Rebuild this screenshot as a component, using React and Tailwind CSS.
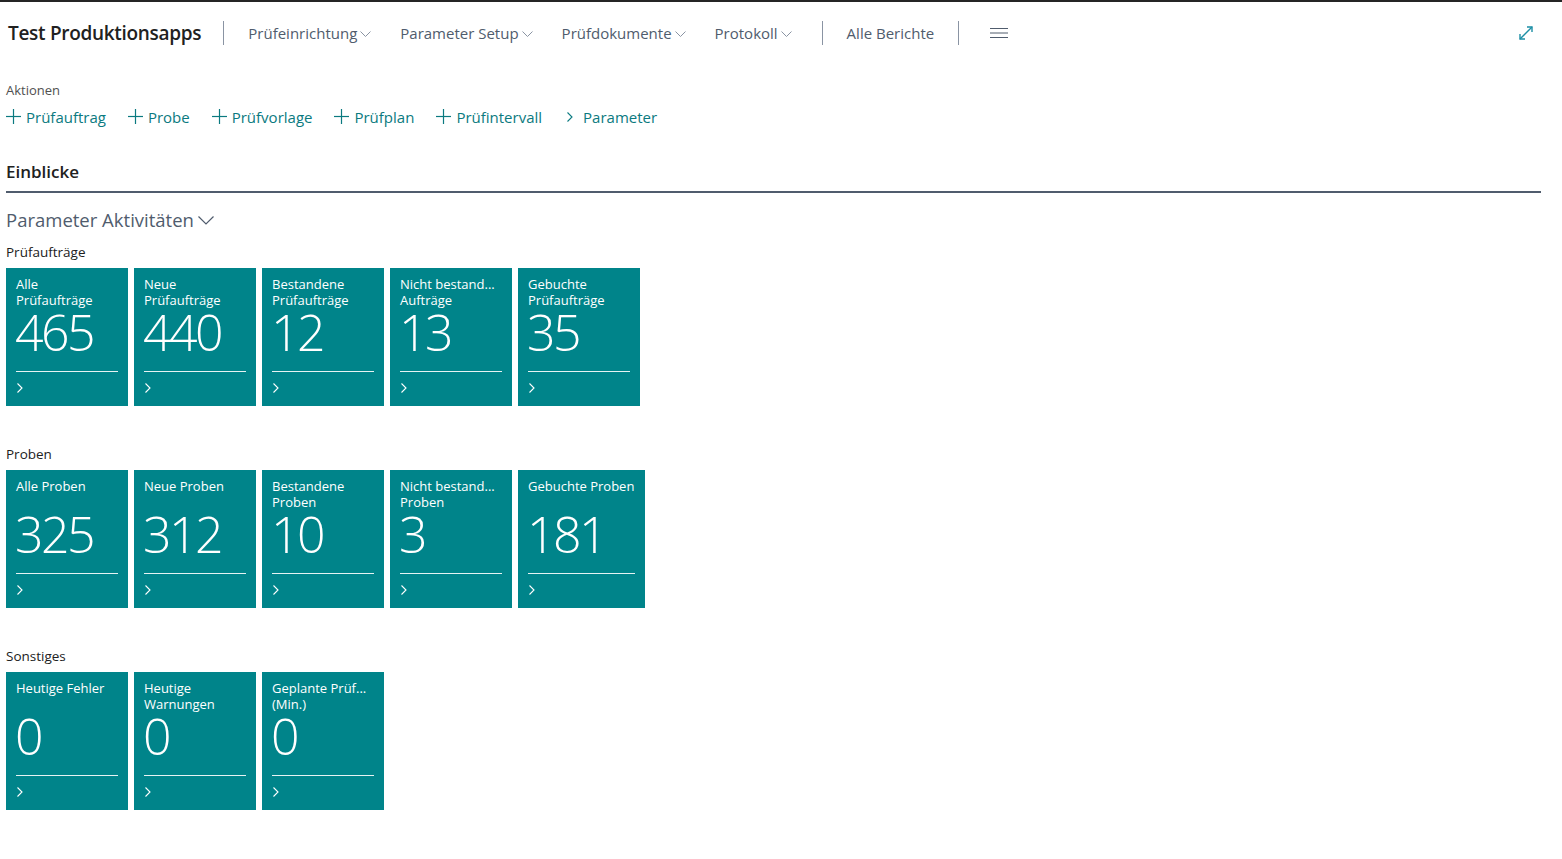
import React from 'react';

const font = { fontFamily: '"Open Sans", "Noto Sans", sans-serif' };

const ChevronDown = () => (
  <svg width="11" height="7" viewBox="0 0 11 7" className="ml-[3px] mt-[3px] text-[#8a94a3]">
    <polyline points="0.5,0.5 5.5,5.5 10.5,0.5" fill="none" stroke="currentColor" strokeWidth="1" />
  </svg>
);

const Plus = () => (
  <svg width="15" height="15" viewBox="0 0 15 15" className="mr-[5px]">
    <line x1="7.5" y1="0" x2="7.5" y2="15" stroke="currentColor" strokeWidth="1.2" />
    <line x1="0" y1="7.5" x2="15" y2="7.5" stroke="currentColor" strokeWidth="1.2" />
  </svg>
);

const ChevronRight = ({ className = '' }) => (
  <svg width="6" height="10" viewBox="0 0 6 10" className={className}>
    <polyline points="0.5,0.5 5,5 0.5,9.5" fill="none" stroke="currentColor" strokeWidth="1.1" />
  </svg>
);

const navItems = ['Prüfeinrichtung', 'Parameter Setup', 'Prüfdokumente', 'Protokoll'];

const actions = ['Prüfauftrag', 'Probe', 'Prüfvorlage', 'Prüfplan', 'Prüfintervall'];

const groups = [
  {
    title: 'Prüfaufträge',
    tiles: [
      { label: ['Alle', 'Prüfaufträge'], value: '465' },
      { label: ['Neue', 'Prüfaufträge'], value: '440' },
      { label: ['Bestandene', 'Prüfaufträge'], value: '12' },
      { label: ['Nicht bestand...', 'Aufträge'], value: '13' },
      { label: ['Gebuchte', 'Prüfaufträge'], value: '35' },
    ],
  },
  {
    title: 'Proben',
    tiles: [
      { label: ['Alle Proben'], value: '325' },
      { label: ['Neue Proben'], value: '312' },
      { label: ['Bestandene', 'Proben'], value: '10' },
      { label: ['Nicht bestand...', 'Proben'], value: '3' },
      { label: ['Gebuchte Proben'], value: '181', wide: true },
    ],
  },
  {
    title: 'Sonstiges',
    tiles: [
      { label: ['Heutige Fehler'], value: '0' },
      { label: ['Heutige', 'Warnungen'], value: '0' },
      { label: ['Geplante Prüf...', '(Min.)'], value: '0' },
    ],
  },
];

function Tile({ tile }) {
  return (
    <div className={`${tile.wide ? 'w-[127px]' : 'w-[122px]'} h-[138px] bg-[#00848a] text-white px-[10px] pt-[8px] flex flex-col`}>
      <div className="h-[32px] text-[13px] leading-[16px] whitespace-nowrap">
        {tile.label.map((l, i) => <div key={i}>{l}</div>)}
      </div>
      <div className="h-[63px]">
        <div className="text-[50px] leading-[48px] font-light tracking-[-2.5px] -ml-[1px]">{tile.value}</div>
      </div>
      <div className="border-t border-white/90 pt-[11px]">
        <ChevronRight className="text-white ml-[1px]" />
      </div>
    </div>
  );
}

export default function App() {
  return (
    <div className="w-[1562px] h-[859px] bg-white overflow-hidden" style={font}>
      <div className="h-[2px] bg-[#252525]" />

      {/* Header */}
      <div className="h-[62px] flex items-center pl-[8px] pr-[28px]">
        <div className="text-[19px] font-semibold text-[#212121] tracking-[-0.3px] whitespace-nowrap">Test Produktionsapps</div>
        <div className="w-px h-[24px] bg-[#8a94a3] ml-[22px] mr-[24px]" />
        <div className="flex items-center gap-[29px]">
          {navItems.map(n => (
            <div key={n} className="flex items-center text-[15px] text-[#505c6d] whitespace-nowrap">
              {n}<ChevronDown />
            </div>
          ))}
        </div>
        <div className="w-px h-[24px] bg-[#8a94a3] ml-[30px] mr-[24px]" />
        <div className="text-[15px] text-[#505c6d] whitespace-nowrap">Alle Berichte</div>
        <div className="w-px h-[24px] bg-[#8a94a3] ml-[24px] mr-[31px]" />
        <svg width="18" height="10" viewBox="0 0 18 10" className="text-[#505c6d]">
          <line x1="0" y1="0.5" x2="18" y2="0.5" stroke="currentColor" strokeWidth="1" />
          <line x1="0" y1="5" x2="18" y2="5" stroke="currentColor" strokeWidth="1" />
          <line x1="0" y1="9.5" x2="18" y2="9.5" stroke="currentColor" strokeWidth="1" />
        </svg>
        <div className="flex-1" />
        <svg width="16" height="16" viewBox="0 0 16 16" className="text-[#1d8fa6]">
          <line x1="2" y1="14" x2="14" y2="2" stroke="currentColor" strokeWidth="1.4" />
          <polyline points="9,2 14,2 14,7" fill="none" stroke="currentColor" strokeWidth="1.4" />
          <polyline points="2,9 2,14 7,14" fill="none" stroke="currentColor" strokeWidth="1.4" />
        </svg>
      </div>

      <div className="px-[6px]">
        {/* Actions */}
        <div className="mt-[17px] text-[13px] text-[#505050]">Aktionen</div>
        <div className="mt-[5px] flex items-center gap-[22px] text-[15px] text-[#0b7a80]">
          {actions.map(a => (
            <div key={a} className="flex items-center whitespace-nowrap">
              <Plus />{a}
            </div>
          ))}
          <div className="flex items-center whitespace-nowrap ml-[1px]">
            <ChevronRight className="mr-[10px] ml-[2px]" />Parameter
          </div>
        </div>

        {/* Einblicke */}
        <div className="mt-[31px] mr-[15px] border-b-2 border-[#505c6d] pb-[6px]">
          <div className="text-[17px] font-semibold text-[#212121]">Einblicke</div>
        </div>

        <div className="mt-[13px] flex items-center text-[18.5px] text-[#505c6d]">
          Parameter Aktivitäten
          <svg width="16" height="9" viewBox="0 0 16 9" className="ml-[4px] mt-[2px]">
            <polyline points="0.5,0.5 8,8 15.5,0.5" fill="none" stroke="currentColor" strokeWidth="1.2" />
          </svg>
        </div>

        {groups.map((g, gi) => (
          <div key={g.title} className={gi === 0 ? 'mt-[9px]' : 'mt-[38px]'}>
            <div className="text-[13.5px] text-[#212121] leading-[20px] mb-[6px]">{g.title}</div>
            <div className="flex gap-[6px]">
              {g.tiles.map((t, i) => <Tile key={i} tile={t} />)}
            </div>
          </div>
        ))}
      </div>
    </div>
  );
}
